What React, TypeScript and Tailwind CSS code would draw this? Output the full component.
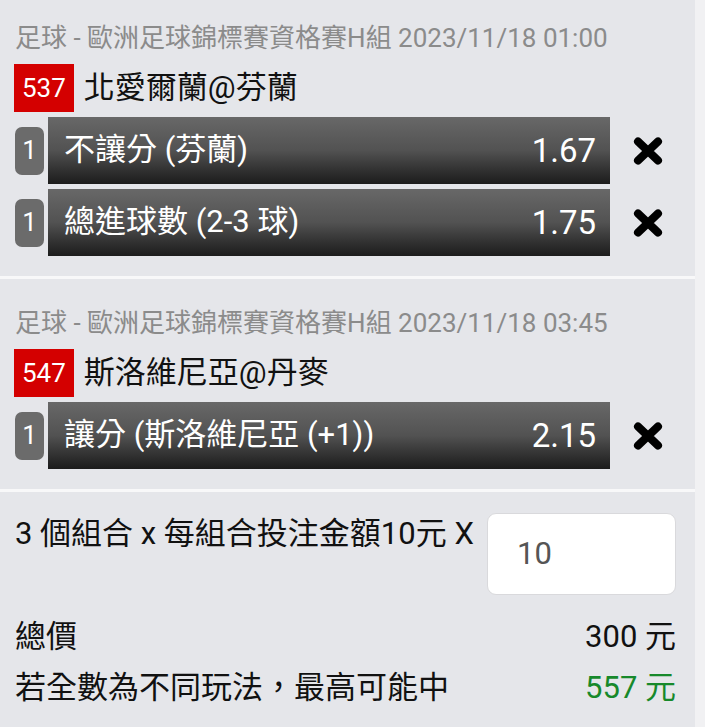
import React from 'react'

interface Bet {
  label: string
  odds: string
}

interface Match {
  header: string
  no: string
  teams: string
  bets: Bet[]
}

const matches: Match[] = [
  {
    header: '足球 - 歐洲足球錦標賽資格賽H組 2023/11/18 01:00',
    no: '537',
    teams: '北愛爾蘭@芬蘭',
    bets: [
      { label: '不讓分 (芬蘭)', odds: '1.67' },
      { label: '總進球數 (2-3 球)', odds: '1.75' },
    ],
  },
  {
    header: '足球 - 歐洲足球錦標賽資格賽H組 2023/11/18 03:45',
    no: '547',
    teams: '斯洛維尼亞@丹麥',
    bets: [{ label: '讓分 (斯洛維尼亞 (+1))', odds: '2.15' }],
  },
]

function CloseIcon() {
  return (
    <svg width="30" height="28" viewBox="0 0 30 28" fill="none">
      <path d="M5 4.5l20 19M25 4.5l-20 19" stroke="#000" strokeWidth="8" strokeLinecap="round" />
    </svg>
  )
}

function BetRow({ bet }: { bet: Bet }) {
  return (
    <div className="flex items-center h-[67px]">
      <div className="w-[29px] h-[48px] ml-px rounded-[7px] bg-[#6b6b6b] text-white text-[26px] flex items-center justify-center">
        1
      </div>
      <div className="ml-[4px] w-[562px] h-full flex items-center justify-between pl-[16px] pr-[14px] bg-gradient-to-b from-[#686868] via-[#525252] to-[#1c1c1c] text-white text-[31px]">
        <span>{bet.label}</span>
        <span className="text-[33px]">{bet.odds}</span>
      </div>
      <div className="ml-[23px]">
        <CloseIcon />
      </div>
    </div>
  )
}

function MatchBlock({ match, first }: { match: Match; first: boolean }) {
  return (
    <section className={`pl-[14px] pb-[20px] ${first ? 'pt-[20px]' : 'pt-[26px]'}`}>
      <p className="h-[36px] leading-[36px] text-[26px] text-[#8b8b8b] pl-px">{match.header}</p>
      <div className="mt-[8px] flex items-center h-[48px]">
        <span className="h-full px-[8px] bg-[#d40000] text-white text-[26px] flex items-center">
          {match.no}
        </span>
        <span className="ml-[10px] text-[31px] text-[#111]">{match.teams}</span>
      </div>
      <div className="mt-[5px] flex flex-col gap-[5px]">
        {match.bets.map((b) => (
          <BetRow key={b.label} bet={b} />
        ))}
      </div>
    </section>
  )
}

export default function App() {
  return (
    <div className="w-[705px] h-[727px] bg-[#f1f1f3] font-['Roboto','Noto_Sans_CJK_TC',sans-serif] overflow-hidden">
      <div className="w-[695px] h-full bg-[#e5e6ea]">
        {matches.map((m, i) => (
          <React.Fragment key={m.no}>
            <MatchBlock match={m} first={i === 0} />
            <div className="h-[3px] bg-[#f8f8f9]" />
          </React.Fragment>
        ))}

        {/* Stake summary */}
        <div className="pl-[15px] pr-[19px] pt-[21px]">
          <div className="flex items-start justify-between">
            <span className="leading-[42px] text-[31px] text-[#111]">3 個組合 x 每組合投注金額10元 X</span>
            <div className="w-[189px] h-[82px] bg-white border border-[#d9d9dc] rounded-[9px] flex items-center pl-[29px] text-[31px] text-[#555]">
              10
            </div>
          </div>
          <div className="mt-[17px] flex items-center justify-between h-[51px] text-[31px] text-[#111]">
            <span>總價</span>
            <span>300 元</span>
          </div>
          <div className="flex items-center justify-between h-[51px] text-[31px] text-[#111]">
            <span>若全數為不同玩法，最高可能中</span>
            <span className="text-[#17892b]">557 元</span>
          </div>
        </div>
      </div>
    </div>
  )
}
